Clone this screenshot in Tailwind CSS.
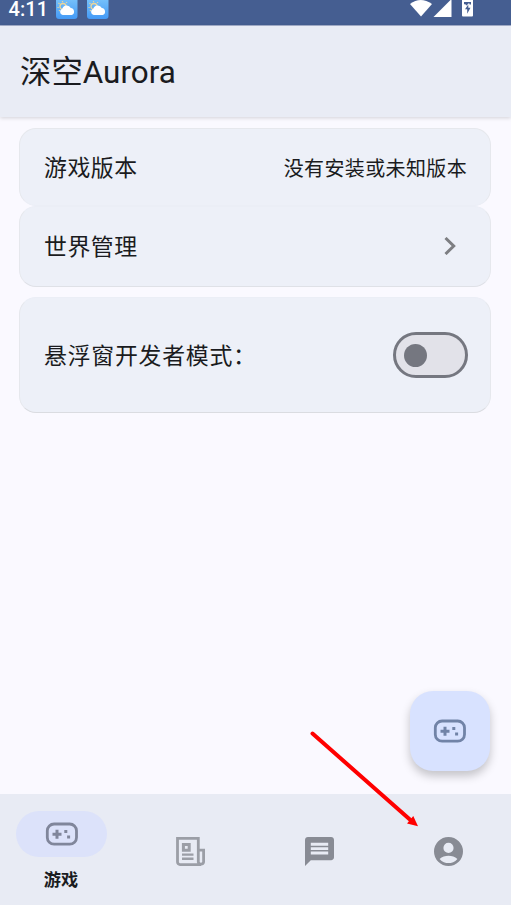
<!DOCTYPE html>
<html lang="zh-CN">
<head>
<meta charset="utf-8">
<meta name="viewport" content="width=device-width">
<title>深空Aurora</title>
<script src="https://cdn.jsdelivr.net/npm/@tailwindcss/browser@4"></script>
</head>
<body class="relative flex h-[905px] w-[511px] flex-col overflow-hidden bg-[#faf9ff] font-['Roboto','Noto_Sans_CJK_SC',sans-serif] text-[#1a1b20]">
<svg class="absolute h-0 w-0">
  <defs><linearGradient id="sky" x1="0" y1="0" x2="0" y2="1"><stop offset="0" stop-color="#74bffa"/><stop offset="1" stop-color="#449af6"/></linearGradient></defs>
  <symbol id="gamepad" viewBox="0 0 34 24">
    <rect x="2.3" y="2" width="29.2" height="20.200" rx="6.8" fill="none" stroke="currentColor" stroke-width="2.800"/>
    <path d="M12 7.700v9M7.500 12.200h9" fill="none" stroke="currentColor" stroke-width="3"/>
    <path d="M19.300 7.900h3v3h-3zM22.100 13.600h3v3h-3z" fill="currentColor"/>
  </symbol>
  <symbol id="weather" viewBox="0 0 22 22">
    <path d="M0 0h21.500v16a3 3 0 0 1-3 3H3a3 3 0 0 1-3-3z" fill="url(#sky)"/>
    <circle cx="7" cy="6.500" r="3" fill="none" stroke="#ecd69a" stroke-width="1.300"/>
    <path d="M6.500 1v1.200M2.500 3l1 .8M1.500 7.500h1.200M11 2l-.8 1M3 11l.8-.8" stroke="#ecd69a" stroke-width="1.200"/>
    <path d="M6.700 15a3.200 3.200 0 0 1-.4-6.200 4.600 4.600 0 0 1 8.500-.8 3.600 3.600 0 0 1 .8 7z" fill="#fff"/>
  </symbol>
</svg>

<div class="flex h-[25.500px] shrink-0 items-start border-b border-[#a5b0cc] bg-[#455e91] pl-[8.500px] pr-[38px]">
  <span class="-mt-px w-[47.500px] text-[20px] leading-[20px] font-medium tracking-[0.1px] text-white">4:11</span>
  <svg class="h-[22px] w-[22px]"><use href="#weather"/></svg>
  <svg class="ml-[9px] h-[22px] w-[22px]"><use href="#weather"/></svg>
  <svg class="ml-auto h-[17px] w-[63px]" viewBox="0 0 63 17" fill="#fff">
    <path d="M0 4Q10.500-4 22 4L11 16.500z"/>
    <path d="M23.500 17L41.500-1v18z"/>
    <path d="M52 0h11v15.500a1 1 0 0 1-1 1h-9a1 1 0 0 1-1-1z"/>
    <path d="M54 2h7v2.500h-1.500v-1h-1.300l-1.200 1.700h-1l-.5-.9h-1.500zM58.300 4.500v3.300h2.200l-3.300 6v-4.500h-2.200z" fill="#455e91"/>
  </svg>
</div>

<header class="z-10 flex h-[91.500px] shrink-0 items-center bg-[#e9ecf5] px-5 shadow-[0_1px_4px_rgba(0,0,0,0.16)]">
  <h1 class="pt-[4px] text-[31.400px] leading-[40px] font-normal">深空Aurora</h1>
</header>

<main class="flex flex-1 flex-col pt-[11px] pr-[20px] pl-[19px]">
  <section class="flex h-[78px] shrink-0 items-center justify-between rounded-[17px] border border-[#e6e8ed] border-b-[#ebeef6] bg-[#edf0f8] px-[24px]">
    <span class="pt-[5px] text-[22.900px] tracking-[0.5px]">游戏版本</span>
    <span class="-mr-[1px] pt-[4px] text-[20px] tracking-[0.36px]">没有安装或未知版本</span>
  </section>
  <section class="flex h-[81px] shrink-0 items-center justify-between rounded-[17px] border border-[#e6e8ed] border-t-[#ebeef6] border-b-[#dfe1e7] bg-[#edf0f8] px-[24px]">
    <span class="pt-[4px] text-[22.900px] tracking-[0.5px]">世界管理</span>
    <svg class="mr-[9.500px] mb-[2px] h-[18px] w-[13px]" viewBox="0 0 13 18" fill="none" stroke="#7d7e82" stroke-width="3"><path d="M1.500 1l8.200 8-8.200 8"/></svg>
  </section>
  <section class="mt-[10px] flex h-[116px] shrink-0 items-center justify-between rounded-[17px] border border-[#e6e8ed] border-t-[#ebeef6] border-b-[#dadce1] bg-[#edf0f8] px-[24px]">
    <span class="pt-[5px] text-[22.900px] tracking-[0.75px]">悬浮窗开发者模式：</span>
    <span role="switch" aria-checked="false" class="-mr-[1.500px] flex h-[46px] w-[75px] items-center rounded-full border-[3px] border-[#757780] bg-[#e2e2e9] pl-[8px]"><span class="h-[23px] w-[23px] rounded-full bg-[#757780]"></span></span>
  </section>
</main>

<button class="absolute top-[691px] left-[410px] flex h-[80px] w-[80px] items-center justify-center rounded-[23px] bg-[#d8e2ff] text-[#7183a7] shadow-[0_5px_10px_rgba(0,0,0,0.22)]">
  <svg class="h-[24px] w-[34px]"><use href="#gamepad"/></svg>
</button>

<nav class="grid h-[111px] shrink-0 grid-cols-[122px_122px_122px_122px] gap-[7px] bg-[#e8ebf4] text-[#888b94]">
  <a class="flex flex-col items-center pt-[17px]">
    <span class="ml-px flex h-[46px] w-[91px] items-center justify-center rounded-full bg-[#dce2fa] text-[#80869b]"><svg class="h-[24px] w-[34px]"><use href="#gamepad"/></svg></span>
    <span class="mt-[11px] text-[17.200px] leading-[24px] font-bold text-[#1a1b20]">游戏</span>
  </a>
  <a class="flex items-center justify-center pt-[4px] text-[#9b9ea6]">
    <svg class="h-[29px] w-[29px]" viewBox="0 0 29 29" fill="none" stroke="currentColor" stroke-width="2.800">
      <path d="M25.200 27.600H4a2.500 2.500 0 0 1-2.500-2.500V1.400h20.800v23.500a2.700 2.700 0 0 0 5.300 0V13.200h-5.300"/>
      <path d="M7.400 7.400h5.800v5.800h-5.800z" stroke-width="3"/>
      <path d="M6 17.600h11.500M6 21.800h11.500" stroke-width="2.400"/>
    </svg>
  </a>
  <a class="flex items-center justify-center pt-[4px]">
    <svg class="h-[29px] w-[29px]" viewBox="2 2 20 20" fill="currentColor"><path d="M20 2H4c-1.100 0-1.990.9-1.990 2L2 22l4-4h14c1.100 0 2-.9 2-2V4c0-1.100-.9-2-2-2zm-2 12H6v-2h12v2zm0-3H6V9h12v2zm0-3H6V6h12v2z"/></svg>
  </a>
  <a class="flex items-center justify-center pt-[4px]">
    <svg class="h-[29px] w-[29px]" viewBox="2 2 20 20" fill="currentColor"><path fill-rule="evenodd" d="M12 2a10 10 0 1 0 0 20 10 10 0 0 0 0-20zm0 4a3.500 3.500 0 1 1 0 7 3.500 3.500 0 0 1 0-7zm0 14c-2.030 0-4.430-.82-6.140-2.880C7.550 15.800 9.680 15 12 15s4.450.8 6.140 2.120C16.430 19.180 14.030 20 12 20z"/></svg>
  </a>
</nav>

<svg class="pointer-events-none absolute top-[725px] left-[305px] z-20 h-[110px] w-[120px]" viewBox="305 725 120 110">
  <path d="M312.500 733.500L411 820.500" stroke="#f00" stroke-width="4" stroke-linecap="round"/>
  <path d="M418 826.300L407 823.500L413.300 816z" fill="#f00"/>
</svg>
</body>
</html>
